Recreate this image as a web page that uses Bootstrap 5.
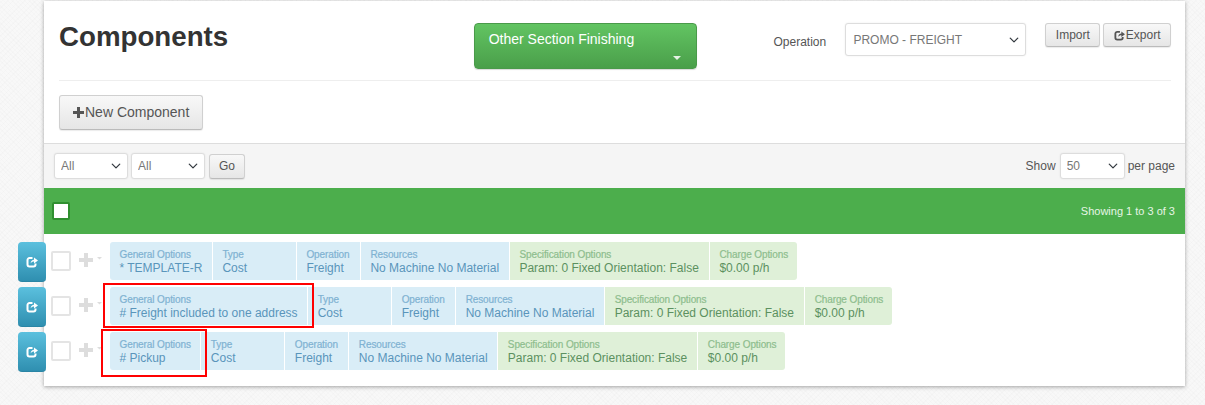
<!DOCTYPE html>
<html lang="en">
<head>
<meta charset="utf-8">
<title>Components</title>
<link rel="stylesheet" href="https://cdn.jsdelivr.net/npm/bootstrap@5.3.0/dist/css/bootstrap.min.css">
<style>
html,body{height:405px;overflow:hidden}
body{font-family:"Liberation Sans",Arial,sans-serif;font-size:13px;color:#555;
  background-color:#f8f8f8;
  background-image:repeating-linear-gradient(45deg,rgba(0,0,0,.012) 0 1px,transparent 1px 3px),repeating-linear-gradient(-45deg,rgba(0,0,0,.012) 0 1px,transparent 1px 4px)}
.sheet{margin:1px 20px 0 44px;width:1141px;height:385px;background:#fff;box-shadow:0 1px 4px rgba(0,0,0,.35)}
.head-row{height:80px;margin:0 14px 0 15px;border-bottom:1px solid #eee;padding-top:22px}
.page-title{font-size:27.7px;font-weight:700;color:#333;line-height:28px;margin:0;width:415px}
.btn-finish{display:block;width:223px;height:46px;padding:5px 14px;text-align:left;font-size:14px;line-height:20px;color:#fff;
  background:linear-gradient(#62c462,#4a9f4a);border:1px solid #4a9a4a;border-radius:4px;position:relative;box-shadow:0 1px 1px rgba(0,0,0,.15)}
.btn-finish:hover{color:#fff}
.caret-down{position:absolute;right:15px;bottom:8px;width:0;height:0;border-left:4px solid transparent;border-right:4px solid transparent;border-top:4px solid #fff;opacity:.85}
.op-label{margin-left:77px;width:72px;font-size:12px;padding-top:10px;color:#555}
.sel{font-family:inherit;font-size:12px;color:#777;border:1px solid #ddd;border-radius:3px;box-shadow:0 0 2px rgba(0,0,0,.08);
  padding:0 20px 0 6px;background-position:right 5px center;background-size:12px 10px;height:26px;line-height:24px}
.sel-op{width:181px;height:33px;padding-left:7px}
.btn-grey{font-size:12px;color:#555;line-height:15px;height:24px;padding:3px 9.5px;background:linear-gradient(#f8f8f8,#e6e6e6);border:1px solid #d0d0d0;border-bottom-color:#bbb;border-radius:3px;box-shadow:0 1px 1px rgba(0,0,0,.08);display:inline-flex;align-items:center}
.btn-grey:hover{color:#555}
.btn-grey svg{margin-right:1px;flex:none}
.btn-new{font-size:14px;height:35px;padding:0 13px;margin:14px 0 0 15px}
.tool-row{margin-top:13px;height:45px;background:#f5f5f5;border-top:1px solid #ddd;padding:9px 10px 0 10px;font-size:12px}
.sel-all{width:74px}
.sel-next{margin-left:3px}
.sel-per{width:65px}
.btn-go{height:25px;width:36px;justify-content:center;margin-top:1px;padding:0}
.per-group{gap:3px}
.per-show{padding-top:4px;margin-right:1px;font-size:12px}
.per-text{padding-top:4px;font-size:12px}
.top-actions{gap:3px;margin-left:19px}
.green-row{height:46px;background:#4cae4c;padding:0 10px 0 8px;color:#e6f5e6;font-size:11px}
.head-check{width:18px;height:18px;background:#fff;border:2px solid #2f8f2f;border-radius:2px}
.rows{margin-left:-26px;margin-top:8px;display:flex;flex-direction:column;gap:5px}
.item{height:40px;display:flex}
.share-btn{width:28px;height:40px;padding:0;background:linear-gradient(#5bc0de,#2f8fb0);border:0;border-bottom:1px solid #2a85a5;border-radius:4px;display:flex;align-items:center;justify-content:center;flex:none;margin-right:5px}
.row-check{width:20px;height:20px;border:2px solid #e4e4e4;border-radius:2px;background:#fff;margin-top:9px;flex:none;box-sizing:border-box}
.plus-mark{width:39px;flex:none;position:relative}
.plus-mark svg{position:absolute;left:8px;top:11px}
.tiles{display:flex;gap:1px;height:38px}
.tile{padding:7px 9.5px 0;background:#d9edf7;white-space:nowrap;position:relative;height:38px}
.tile.first{border-radius:3px 0 0 3px}
.tile.gn{background:#dff0d8}
.tile.last{border-radius:0 3px 3px 0}
.tile.type{width:83px}
.tile.oper{width:63px}
.tile.res{width:148px}
.tile.spec{width:199px}
.tile.charge{width:87px}
.cap{font-size:10px;line-height:11px;color:#7fb2d2;letter-spacing:-.01em;-webkit-text-stroke:.2px currentColor}
.tile.gn .cap{color:#8dbd8d}
.val{font-size:12px;line-height:14px;margin-top:1px;color:#5a95bb}
.tile.gn .val{color:#5c9160}
.red-box{position:absolute;z-index:2;border:2px solid #f00;pointer-events:none}
.rb1{left:-7px;top:-4px;width:211px;height:45px}
.rb2{left:-9px;top:-3px;width:106px;height:48px}
</style>
</head>
<body>
<svg width="0" height="0" class="position-absolute">
  <symbol id="i-share" viewBox="0 0 12 12">
    <path d="M6.5 2H3.5A2 2 0 0 0 1.5 4V8.5A2 2 0 0 0 3.5 10.5H7.5A2 2 0 0 0 9.5 8.5V7.5" fill="none" stroke="currentColor" stroke-width="2"/>
    <path d="M4.6 7.4C4.8 5 6.4 3.8 8 3.8V1.6L12 4.6 8 7.6V5.6C6.7 5.6 5.4 6.1 4.6 7.4Z" fill="currentColor"/>
  </symbol>
</svg>
<main class="sheet">
  <div class="head-row d-flex align-items-start">
    <h1 class="page-title">Components</h1>
    <a class="btn btn-finish" href="#">Other Section Finishing<span class="caret-down"></span></a>
    <div class="op-label">Operation</div>
    <select class="form-select sel sel-op"><option>PROMO - FREIGHT</option></select>
    <div class="d-flex top-actions">
      <a class="btn btn-grey" href="#">Import</a>
      <a class="btn btn-grey" href="#"><svg width="11" height="11"><use href="#i-share"/></svg>Export</a>
    </div>
  </div>
  <a class="btn btn-grey btn-new" href="#"><svg width="11" height="11" viewBox="0 0 11 11" fill="#555"><path d="M4 0h3v4h4v3H7v4H4V7H0V4h4z"/></svg>New Component</a>
  <div class="tool-row d-flex">
    <select class="form-select sel sel-all"><option>All</option></select>
    <select class="form-select sel sel-all sel-next"><option>All</option></select>
    <button class="btn btn-grey btn-go ms-1" type="button">Go</button>
    <div class="ms-auto d-flex per-group">
      <span class="per-show">Show</span>
      <select class="form-select sel sel-per"><option>50</option></select>
      <span class="per-text">per page</span>
    </div>
  </div>
  <div class="green-row d-flex align-items-center justify-content-between">
    <span class="head-check"></span>
    <span>Showing 1 to 3 of 3</span>
  </div>
  <div class="rows">
    <div class="item">
      <button class="share-btn text-white" type="button"><svg width="12" height="12"><use href="#i-share"/></svg></button>
      <span class="row-check"></span>
      <span class="plus-mark"><svg width="24" height="16" viewBox="0 0 24 16" fill="#ddd"><path d="M5 0h4v5h5v4H9v5H5V9H0V5h5z"/><path d="M18 4h5l-2.5 2.5z"/></svg></span>
      <div class="tiles">
        <div class="tile first"><div class="cap">General Options</div><div class="val">* TEMPLATE-R</div></div>
        <div class="tile type"><div class="cap">Type</div><div class="val">Cost</div></div>
        <div class="tile oper"><div class="cap">Operation</div><div class="val">Freight</div></div>
        <div class="tile res"><div class="cap">Resources</div><div class="val">No Machine No Material</div></div>
        <div class="tile gn spec"><div class="cap">Specification Options</div><div class="val">Param: 0 Fixed Orientation: False</div></div>
        <div class="tile gn last charge"><div class="cap">Charge Options</div><div class="val">$0.00 p/h</div></div>
      </div>
    </div>
    <div class="item">
      <button class="share-btn text-white" type="button"><svg width="12" height="12"><use href="#i-share"/></svg></button>
      <span class="row-check"></span>
      <span class="plus-mark"><svg width="24" height="16" viewBox="0 0 24 16" fill="#ddd"><path d="M5 0h4v5h5v4H9v5H5V9H0V5h5z"/><path d="M18 4h5l-2.5 2.5z"/></svg></span>
      <div class="tiles">
        <div class="tile first"><div class="cap">General Options</div><div class="val"># Freight included to one address</div><span class="red-box rb1"></span></div>
        <div class="tile type"><div class="cap">Type</div><div class="val">Cost</div></div>
        <div class="tile oper"><div class="cap">Operation</div><div class="val">Freight</div></div>
        <div class="tile res"><div class="cap">Resources</div><div class="val">No Machine No Material</div></div>
        <div class="tile gn spec"><div class="cap">Specification Options</div><div class="val">Param: 0 Fixed Orientation: False</div></div>
        <div class="tile gn last charge"><div class="cap">Charge Options</div><div class="val">$0.00 p/h</div></div>
      </div>
    </div>
    <div class="item">
      <button class="share-btn text-white" type="button"><svg width="12" height="12"><use href="#i-share"/></svg></button>
      <span class="row-check"></span>
      <span class="plus-mark"><svg width="24" height="16" viewBox="0 0 24 16" fill="#ddd"><path d="M5 0h4v5h5v4H9v5H5V9H0V5h5z"/><path d="M18 4h5l-2.5 2.5z"/></svg></span>
      <div class="tiles">
        <div class="tile first"><div class="cap">General Options</div><div class="val"># Pickup</div><span class="red-box rb2"></span></div>
        <div class="tile type"><div class="cap">Type</div><div class="val">Cost</div></div>
        <div class="tile oper"><div class="cap">Operation</div><div class="val">Freight</div></div>
        <div class="tile res"><div class="cap">Resources</div><div class="val">No Machine No Material</div></div>
        <div class="tile gn spec"><div class="cap">Specification Options</div><div class="val">Param: 0 Fixed Orientation: False</div></div>
        <div class="tile gn last charge"><div class="cap">Charge Options</div><div class="val">$0.00 p/h</div></div>
      </div>
    </div>
  </div>
</main>
<script src="https://cdn.jsdelivr.net/npm/bootstrap@5.3.0/dist/js/bootstrap.bundle.min.js"></script>
</body>
</html>
